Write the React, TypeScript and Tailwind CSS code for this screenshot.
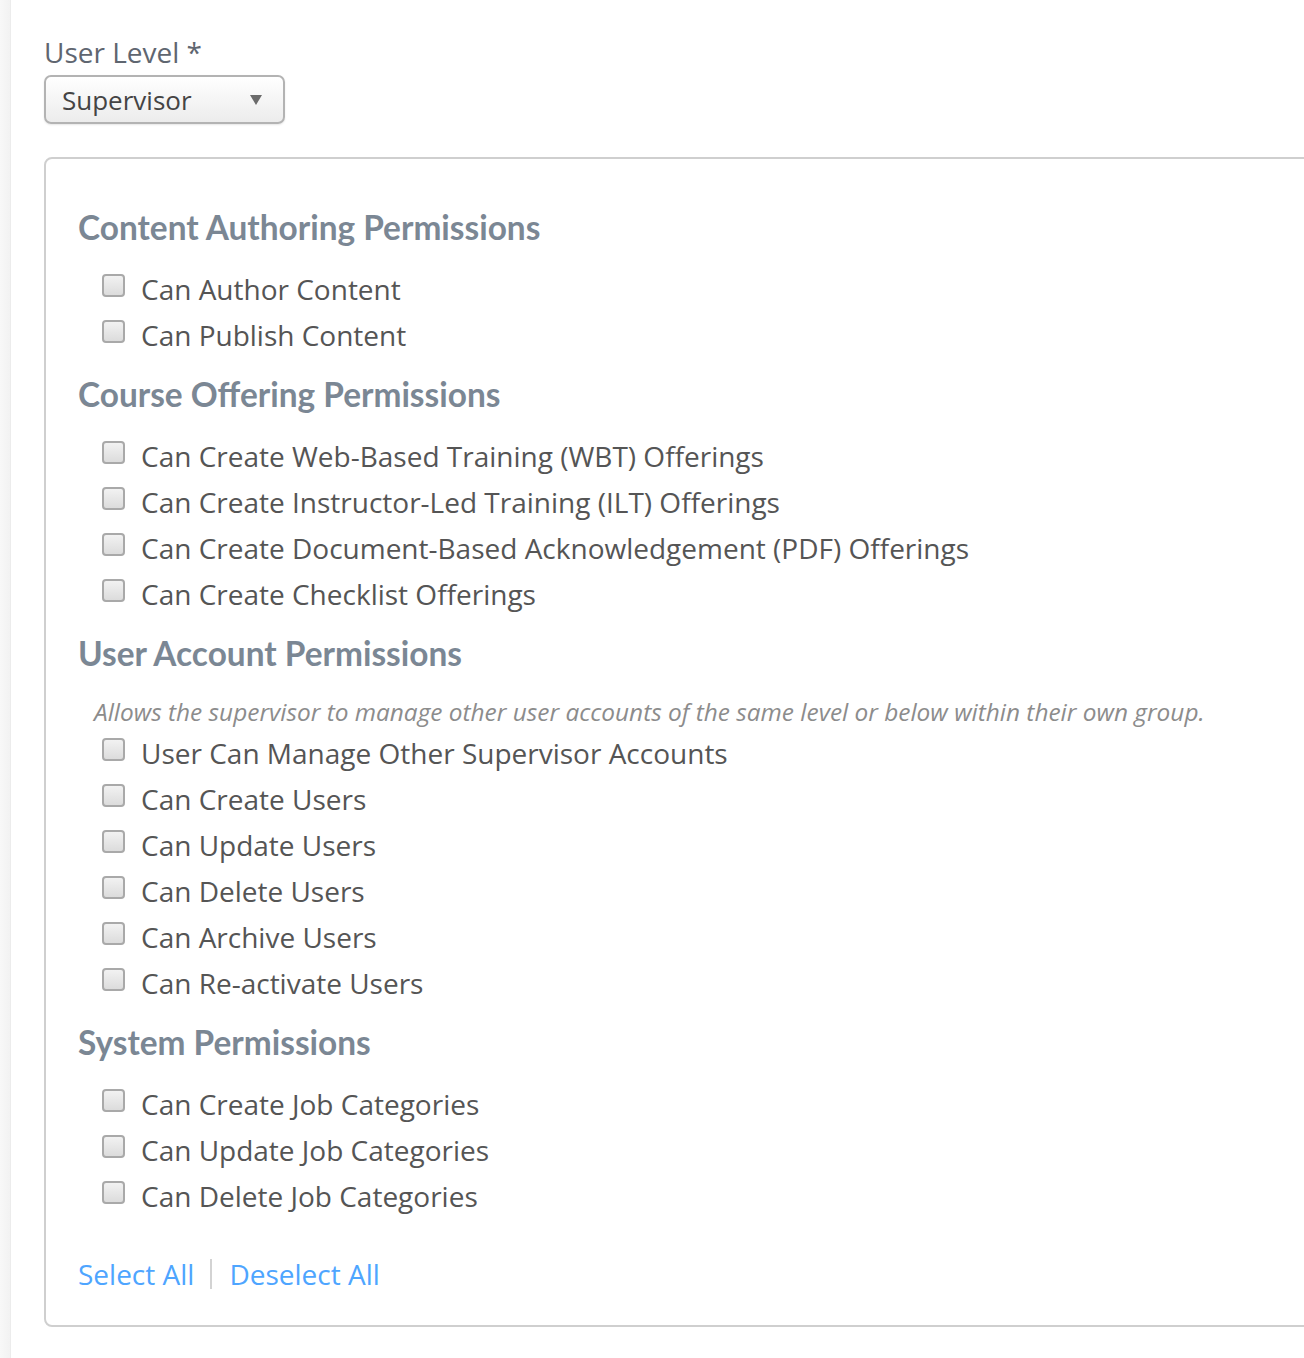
import React from "react";

const sections: { title: string; note?: string; items: string[] }[] = [
  { title: "Content Authoring Permissions", items: ["Can Author Content", "Can Publish Content"] },
  {
    title: "Course Offering Permissions",
    items: [
      "Can Create Web-Based Training (WBT) Offerings",
      "Can Create Instructor-Led Training (ILT) Offerings",
      "Can Create Document-Based Acknowledgement (PDF) Offerings",
      "Can Create Checklist Offerings",
    ],
  },
  {
    title: "User Account Permissions",
    note: "Allows the supervisor to manage other user accounts of the same level or below within their own group.",
    items: [
      "User Can Manage Other Supervisor Accounts",
      "Can Create Users",
      "Can Update Users",
      "Can Delete Users",
      "Can Archive Users",
      "Can Re-activate Users",
    ],
  },
  {
    title: "System Permissions",
    items: ["Can Create Job Categories", "Can Update Job Categories", "Can Delete Job Categories"],
  },
];

function Row({ label }: { label: string }) {
  return (
    <label className="flex h-[46px] items-center pl-[24px]">
      <span className="mb-[7px] h-[23px] w-[23px] shrink-0 rounded-[4px] border-2 border-[#a9a9a9] bg-gradient-to-b from-[#f2f2f2] to-[#dcdcdc]" />
      <span className="ml-[16px] mb-[1px] whitespace-nowrap text-[28px] leading-[46px] text-[#555]">{label}</span>
    </label>
  );
}

export default function App() {
  return (
    <div
      className="flex min-h-[1358px] w-full overflow-hidden bg-white"
      style={{ fontFamily: '"Open Sans", "Noto Sans", sans-serif' }}
    >
      <div className="w-[11px] shrink-0 border-r border-[#ececec] bg-gradient-to-r from-[#f8f8f8] to-[#f2f2f2]" />
      <div className="flex-1 pl-[33px] pt-[34px]">
        <div className="text-[28px] leading-[36px] text-[#5f6670]">User Level *</div>
        <div className="mt-[5px] flex h-[49px] w-[241px] items-center justify-between rounded-[7px] border-2 border-[#b3b3b3] bg-gradient-to-b from-white to-[#ececec] pl-[16px] pr-[21px] shadow-[0_1px_2px_rgba(0,0,0,0.1)]">
          <span className="text-[26px] leading-[36px] text-[#444]">Supervisor</span>
          <svg width="12" height="10" viewBox="0 0 12 10">
            <path d="M0 0 L12 0 L6 10 Z" fill="#6b6b6b" />
          </svg>
        </div>
        <div className="mr-[-40px] mt-[33px] rounded-l-[8px] border-2 border-[#cfcfcf] pb-[31px] pl-[32px] pt-[48px]">
          {sections.map((s, i) => (
            <div key={s.title} className={i === 0 ? "" : "mt-[16px]"}>
              <h2
                className="h-[40px] whitespace-nowrap text-[33.4px] font-bold leading-[40px] text-[#7b8794]"
                style={{ fontFamily: 'Lato, "Open Sans", sans-serif' }}
              >
                {s.title}
              </h2>
              {s.note ? (
                <div className="mb-[2px] mt-[23px] whitespace-nowrap pl-[16px] text-[24.4px] italic leading-[32px] text-[#8c8c8c]">
                  {s.note}
                </div>
              ) : (
                <div className="h-[19px]" />
              )}
              {s.items.map((it) => (
                <Row key={it} label={it} />
              ))}
            </div>
          ))}
          <div className="mt-[35px] flex h-[40px] items-center text-[28px] leading-[40px] text-[#4ea5ff]">
            <a className="cursor-pointer">Select All</a>
            <span className="ml-[16px] mr-[17px] h-[30px] w-[2px] bg-[#d3d3d3]" />
            <a className="cursor-pointer">Deselect All</a>
          </div>
        </div>
      </div>
    </div>
  );
}
